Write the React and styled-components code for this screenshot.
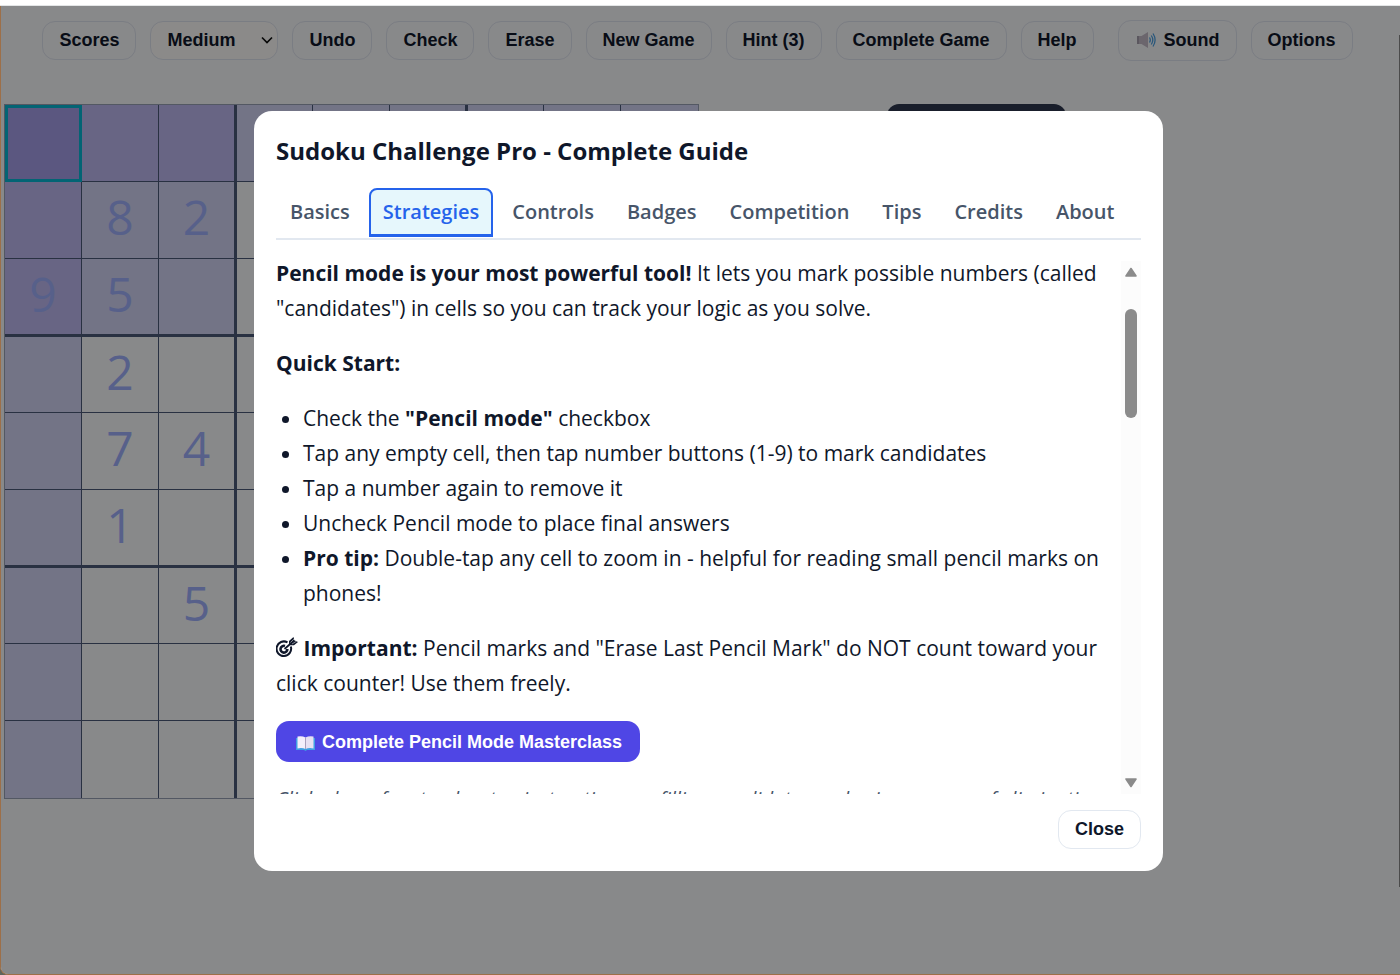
import React from "react";
import styled, { createGlobalStyle } from "styled-components";

const ui = `"Open Sans", "Noto Sans", sans-serif`;
const arial = `"Liberation Sans", Arial, sans-serif`;

const GlobalStyle = createGlobalStyle`
  * { box-sizing: border-box; }
  body { margin: 0; background: #f4f5f6; font-family: ${ui}; color: #0f172a; }
`;

const Page = styled.div`
  display: flex;
  flex-direction: column;
  height: 100vh;
  overflow: hidden;
  background: linear-gradient(#ffffff 50%, #5f665c 50%);
`;

const TopStrip = styled.div`
  height: 6px;
  flex: none;
  background: #ffffff;
  border-bottom: 1px solid #e3e5e6;
`;

const Frame = styled.div`
  position: relative;
  flex: 1;
  min-height: 0;
  overflow: hidden;
  background: #f8fafc;
  border-left: 1px solid #9d6f48;
  border-bottom: 1px solid #9d6f48;
  border-radius: 0 0 0 8px;
`;

const Toolbar = styled.header`
  display: flex;
  justify-content: center;
  align-items: center;
  gap: 14px;
  height: 42px;
  margin: 13px 6px 0 0;
`;

const Button = styled.button`
  height: ${(p) => (p.$tall ? 41 : 39)}px;
  margin-left: ${(p) => (p.$apart ? 10 : 0)}px;
  padding: 0 16px;
  display: inline-flex;
  align-items: center;
  gap: 7px;
  border: 1px solid ${(p) => (p.$onWhite ? "#e2e8f0" : "#dfe3ee")};
  border-radius: 13px;
  background: ${(p) => (p.$onWhite ? "#ffffff" : "transparent")};
  color: #0f172a;
  font: bold 18px ${arial};
  white-space: nowrap;
`;

const SelectWrap = styled.label`
  position: relative;
  display: block;
`;

const Select = styled.select`
  appearance: none;
  width: 128px;
  height: 39px;
  padding: 0 16px;
  border: 1px solid #dfe3ee;
  border-radius: 13px;
  background: #fdfcfa;
  color: #0f172a;
  font: bold 18px ${arial};
`;

const Chevron = styled.svg`
  position: absolute;
  right: 4px;
  top: 13px;
  pointer-events: none;
`;

const Main = styled.main`
  display: flex;
  align-items: flex-start;
  gap: 188px;
  margin: 43px 0 0 3px;
`;

const Board = styled.div`
  display: grid;
  grid-template-columns: repeat(9, 77px);
  grid-auto-rows: 77px;
  border: 1px solid #98a1b4;
`;

const cellColors = { none: "transparent", peer: "#d1d3f4", strong: "#bdb8f0", selected: "#a79ee9" };

const Cell = styled.button`
  padding: 0 0 6px;
  border: 0 solid #4b5a78;
  border-right-width: ${(p) => (p.$col === 8 ? 0 : p.$col % 3 === 2 ? 2 : 1)}px;
  border-left-width: ${(p) => (p.$col && p.$col % 3 === 0 ? 1 : 0)}px;
  border-bottom-width: ${(p) => (p.$row === 8 ? 0 : p.$row % 3 === 2 ? 2 : 1)}px;
  border-top-width: ${(p) => (p.$row && p.$row % 3 === 0 ? 1 : 0)}px;
  background: ${(p) => cellColors[p.$tone]};
  outline: ${(p) => (p.$tone === "selected" ? "3px solid #06b6d4" : "none")};
  outline-offset: -3px;
  color: #9fb0fb;
  font: 400 48px/1 ${ui};
`;

const Timer = styled.div`
  width: 179px;
  height: 60px;
  border-radius: 12px;
  background: #2f384f;
`;

const PageScroll = styled.div`
  position: absolute;
  right: 0;
  top: 29px;
  width: 1px;
  height: 88%;
  background: #4b4b4b;
  z-index: 2;
`;

const Backdrop = styled.div`
  position: absolute;
  inset: 0;
  display: flex;
  align-items: center;
  justify-content: center;
  padding: 2px 0 0 16px;
  background: rgba(0, 0, 0, 0.45);
`;

const Modal = styled.section`
  display: flex;
  flex-direction: column;
  width: 65%;
  min-width: 909px;
  max-height: calc(100vh - 215px);
  padding: 22px;
  border-radius: 18px;
  background: #ffffff;
`;

const Title = styled.h2`
  margin: 0;
  font: 700 24px/36px ${ui};
`;

const Tabs = styled.nav`
  display: flex;
  gap: 5px;
  flex: none;
  margin-top: 19px;
  padding-bottom: 1px;
  border-bottom: 2px solid #e2e8f0;
`;

const Tab = styled.button`
  height: 49px;
  padding: 0 12px;
  border: 2px solid ${(p) => (p.$active ? "#2563eb" : "transparent")};
  border-bottom-width: 3px;
  border-radius: 8px 8px 0 0;
  background: ${(p) => (p.$active ? "#e6f7fc" : "transparent")};
  color: ${(p) => (p.$active ? "#2563eb" : "#475569")};
  font: 600 20px/28px ${ui};
`;

const Scroller = styled.div`
  display: flex;
  flex: 1;
  min-height: 0;
  margin-top: 16px;
`;

const Content = styled.div`
  flex: 1;
  min-width: 0;
  overflow: hidden;
  font-size: 21px;
  line-height: 35px;
`;

const Para = styled.p`
  margin: 0 0 20px;
`;

const List = styled.ul`
  margin: 0 0 20px;
  padding-left: 27px;
`;

const Primary = styled.button`
  display: flex;
  align-items: center;
  gap: 7px;
  height: 41px;
  margin-bottom: 19px;
  padding: 2px 18px 0 20px;
  border: 0;
  border-radius: 13px;
  background: #4f46e5;
  color: #ffffff;
  font: bold 18px ${arial};
`;

const Hint = styled.p`
  margin: 0;
  color: #475569;
  font-size: 20px;
  font-style: italic;
  white-space: nowrap;
`;

const Track = styled.div`
  display: flex;
  flex-direction: column;
  align-items: center;
  width: 20px;
  margin-top: 5px;
  padding: 6px 0;
  background: #fcfcfc;
`;

const Thumb = styled.div`
  width: 12px;
  height: 109px;
  margin: 32px 0 auto;
  border-radius: 6px;
  background: #8b8b8b;
`;

const Footer = styled.footer`
  display: flex;
  justify-content: flex-end;
  margin-top: 16px;
`;

const Speaker = () => (
  <svg width="22" height="18" viewBox="0 0 22 18" aria-hidden="true">
    <path d="M2 5h4.500L13 1v16l-6.500-4H2z" fill="#c3bac6" />
    <path d="M2 5h2v8H2z" fill="#a79fae" />
    <path d="M14.500 6.500q1.600 2.500 0 5M16.300 4.500q3 4.500 0 9M18 2.500q4.200 6.500 0 13" fill="none" stroke="#4c9fe0" strokeWidth="1.300" />
  </svg>
);

const Book = () => (
  <svg width="19" height="16" viewBox="0 0 19 16" aria-hidden="true">
    <path d="M0 3h19v12h-8l-1.500 1L8 15H0z" fill="#3f9fe3" />
    <path d="M1.500 1.500Q6 .5 9.500 2.500V14Q6 12.500 1.500 13.500z" fill="#f4effa" />
    <path d="M17.500 1.500Q13 .5 9.500 2.500V14q3.500-1.500 8-.5z" fill="#e7e0f2" />
    <path d="M9.500 2.500V14" stroke="#a9a0bd" strokeWidth="1" />
  </svg>
);

const TargetIcon = styled.svg`
  vertical-align: -3px;
`;

const Target = () => (
  <TargetIcon width="22" height="22" viewBox="0 0 22 22" aria-hidden="true">
    <path d="M11.500 5.400A7.300 7.300 0 1 0 14.800 9.500" fill="none" stroke="#0f172a" strokeWidth="2" />
    <path d="M9 9A3.400 3.400 0 1 0 11.300 12" fill="none" stroke="#0f172a" strokeWidth="2.600" />
    <path d="M8.500 12L17 4.500" stroke="#0f172a" strokeWidth="1.700" />
    <path d="M13 7V4l4.500-4 .8 3.200L22 5l-4 3.300h-3.700z" fill="#0f172a" />
    <path d="M14.500 5.500l4-4M16 7l4.500-2.800" stroke="#ffffff" strokeWidth=".5" />
  </TargetIcon>
);

const Arrow = ({ down }) => (
  <svg width="14" height="10" viewBox="0 0 14 10" aria-hidden="true">
    <path
      d={down ? "M2 1h10L7 8.500z" : "M2 9h10L7 1.500z"}
      fill="#8b8b8b"
      stroke="#8b8b8b"
      strokeWidth="1.600"
      strokeLinejoin="round"
    />
  </svg>
);

const puzzle = [
  "         ",
  " 82      ",
  "95       ",
  " 2       ",
  " 74      ",
  " 1       ",
  "  5      ",
  "         ",
  "         ",
];

const toneOf = (r, c) => {
  if (r === 0 && c === 0) return "selected";
  const line = r === 0 || c === 0;
  const box = r < 3 && c < 3;
  if (line && box) return "strong";
  return line || box ? "peer" : "none";
};

const tabs = ["Basics", "Strategies", "Controls", "Badges", "Competition", "Tips", "Credits", "About"];

export default function App() {
  return (
    <>
      <GlobalStyle />
      <Page>
        <TopStrip />
        <Frame>
          <Toolbar>
            <Button>Scores</Button>
            <SelectWrap>
              <Select aria-label="Difficulty" defaultValue="Medium">
                <option>Easy</option>
                <option>Medium</option>
                <option>Hard</option>
              </Select>
              <Chevron width="14" height="12" viewBox="0 0 14 12">
                <path d="M2 3.500l5 5 5-5" fill="none" stroke="#111" strokeWidth="1.700" />
              </Chevron>
            </SelectWrap>
            {["Undo", "Check", "Erase", "New Game", "Hint (3)", "Complete Game", "Help"].map((t) => (
              <Button key={t}>{t}</Button>
            ))}
            <Button $tall $apart>
              <Speaker />
              Sound
            </Button>
            <Button>Options</Button>
          </Toolbar>
          <Main>
            <Board>
              {puzzle.flatMap((row, r) =>
                [...row].map((n, c) => (
                  <Cell
                    key={`${r}-${c}`}
                    $row={r}
                    $col={c}
                    $tone={toneOf(r, c)}
                    aria-label={`Row ${r + 1}, column ${c + 1}`}
                  >
                    {n.trim()}
                  </Cell>
                ))
              )}
            </Board>
            <Timer />
          </Main>
          <PageScroll />
          <Backdrop>
            <Modal role="dialog" aria-modal="true" aria-labelledby="guide-title">
              <Title id="guide-title">Sudoku Challenge Pro - Complete Guide</Title>
              <Tabs role="tablist">
                {tabs.map((t) => (
                  <Tab key={t} role="tab" aria-selected={t === "Strategies"} $active={t === "Strategies"}>
                    {t}
                  </Tab>
                ))}
              </Tabs>
              <Scroller>
                <Content>
                  <Para>
                    <b>Pencil mode is your most powerful tool!</b> It lets you mark possible numbers (called
                    "candidates") in cells so you can track your logic as you solve.
                  </Para>
                  <Para>
                    <b>Quick Start:</b>
                  </Para>
                  <List>
                    <li>
                      Check the <b>"Pencil mode"</b> checkbox
                    </li>
                    <li>Tap any empty cell, then tap number buttons (1-9) to mark candidates</li>
                    <li>Tap a number again to remove it</li>
                    <li>Uncheck Pencil mode to place final answers</li>
                    <li>
                      <b>Pro tip:</b> Double-tap any cell to zoom in - helpful for reading small pencil marks on
                      phones!
                    </li>
                  </List>
                  <Para>
                    <Target /> <b>Important:</b> Pencil marks and "Erase Last Pencil Mark" do NOT count toward your
                    click counter! Use them freely.
                  </Para>
                  <Primary>
                    <Book />
                    Complete Pencil Mode Masterclass
                  </Primary>
                  <Hint>
                    Click above for step-by-step instructions on filling candidates and using process of elimination
                  </Hint>
                </Content>
                <Track aria-hidden="true">
                  <Arrow />
                  <Thumb />
                  <Arrow down />
                </Track>
              </Scroller>
              <Footer>
                <Button $onWhite>Close</Button>
              </Footer>
            </Modal>
          </Backdrop>
        </Frame>
      </Page>
    </>
  );
}
